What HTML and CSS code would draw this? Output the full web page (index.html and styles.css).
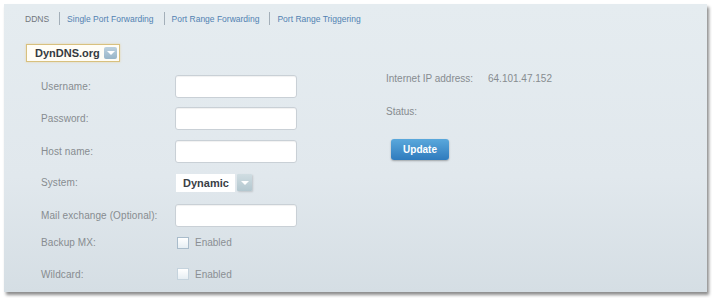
FILE: index.html
```html
<!DOCTYPE html>
<html lang="en">
<head>
  <meta charset="UTF-8">
  <title>DDNS</title>
  <link rel="stylesheet" href="styles.css">
</head>
<body>
  <div class="panel">
    <!-- Sub tabs -->
    <nav class="tabs">
      <span class="tab current">DDNS</span>
      <span class="sep"></span>
      <a class="tab" href="#">Single Port Forwarding</a>
      <span class="sep"></span>
      <a class="tab" href="#">Port Range Forwarding</a>
      <span class="sep"></span>
      <a class="tab" href="#">Port Range Triggering</a>
    </nav>

    <!-- Provider dropdown -->
    <div class="provider">
      <span class="provider-value">DynDNS.org</span>
      <span class="arrow-btn"><span class="tri"></span></span>
    </div>

    <div class="columns">
      <div class="form">
        <div class="form-row">
          <label class="label">Username:</label>
          <input class="text-input" type="text">
        </div>
        <div class="form-row r33">
          <label class="label">Password:</label>
          <input class="text-input" type="password">
        </div>
        <div class="form-row">
          <label class="label">Host name:</label>
          <input class="text-input" type="text">
        </div>
        <div class="form-row r31">
          <label class="label">System:</label>
          <div class="system-select">
            <span class="system-value">Dynamic</span>
            <span class="arrow-btn small"><span class="tri"></span></span>
          </div>
        </div>
        <div class="form-row r35">
          <label class="label">Mail exchange (Optional):</label>
          <input class="text-input" type="text">
        </div>
        <div class="form-row r19">
          <label class="label">Backup MX:</label>
          <span class="check"></span>
          <span class="check-text">Enabled</span>
        </div>
        <div class="form-row r40">
          <label class="label">Wildcard:</label>
          <span class="check faded"></span>
          <span class="check-text">Enabled</span>
        </div>
      </div>

      <div class="info">
        <div class="info-row">
          <span class="info-label">Internet IP address:</span>
          <span class="info-value">64.101.47.152</span>
        </div>
        <div class="info-row">
          <span class="info-label">Status:</span>
        </div>
        <button class="update-btn">Update</button>
      </div>
    </div>
  </div>
</body>
</html>
```

FILE: styles.css
```css
body {
  margin: 0;
  background-color: #ffffff;
  font-family: "Liberation Sans", Arial, sans-serif;
  font-size: 10px;
  color: #808589;
}
.panel {
  margin: 4px 5px 6px 4px;
  height: 288px;
  background: linear-gradient(to bottom, #e5ecf0 0%, #e1e8ed 60%, #d5dee4 100%);
  box-shadow: 2px 3px 3px rgba(0, 0, 0, 0.45);
  box-sizing: border-box;
  padding: 0 0 0 21px;
}

/* Tabs */
.tabs {
  display: flex;
  align-items: center;
  height: 29px;
  font-size: 8.5px;
}
.tab {
  color: #5282b2;
  text-decoration: none;
}
.tab.current {
  color: #71777c;
}
.sep {
  width: 1px;
  height: 13px;
  background-color: #a3afb9;
  margin: 0 7px 0 10px;
}

/* Provider dropdown */
.provider {
  display: flex;
  align-items: center;
  width: 94px;
  height: 18px;
  margin: 11px 0 0 1px;
  box-sizing: border-box;
  border: 1px solid #d8c07e;
  background-color: #fffdf6;
  box-shadow: 0 0 2px rgba(230, 200, 120, 0.6);
  padding: 0 2px 0 8px;
}
.provider-value {
  flex: 1;
  font-size: 11px;
  font-weight: bold;
  color: #353a3f;
}
.arrow-btn {
  display: flex;
  align-items: center;
  justify-content: center;
  width: 13px;
  height: 12px;
  background: linear-gradient(to bottom, #bcd1df, #98b5c8);
  border-radius: 2px;
}
.tri {
  width: 0;
  height: 0;
  border-left: 4px solid transparent;
  border-right: 4px solid transparent;
  border-top: 4px solid #ffffff;
}

/* Columns */
.columns {
  display: flex;
  margin-top: 8px;
}
.form {
  width: 344px;
  padding-left: 16px;
}
.form-row {
  display: flex;
  align-items: center;
  height: 32px;
}
.form-row.r33 { height: 33px; }
.form-row.r31 { height: 31px; }
.form-row.r35 { height: 35px; }
.form-row.r19 { height: 19px; }
.form-row.r40 { height: 40px; padding-top: 4px; box-sizing: border-box; }
.label {
  width: 134px;
  color: #878c90;
  letter-spacing: 0.1px;
}
.text-input {
  width: 122px;
  height: 23px;
  box-sizing: border-box;
  border: 1px solid #c9d0d6;
  border-radius: 3px;
  background-color: #ffffff;
  box-shadow: inset 0 1px 1px rgba(0, 0, 0, 0.06);
  margin: 0;
}

/* System select */
.system-select {
  display: flex;
  align-items: center;
  height: 18px;
  margin-left: 1px;
}
.system-value {
  display: flex;
  align-items: center;
  width: 59px;
  height: 18px;
  box-sizing: border-box;
  padding-left: 7px;
  background-color: #ffffff;
  font-size: 11px;
  font-weight: bold;
  color: #3a4046;
}
.arrow-btn.small {
  width: 15px;
  height: 17px;
  margin-left: 2px;
  border-radius: 1px;
  background: linear-gradient(to bottom, #d0dde2, #b3c7cf);
  box-shadow: 1px 1px 2px rgba(0, 0, 0, 0.15);
}

/* Checkboxes */
.check {
  width: 10px;
  height: 10px;
  border: 1px solid #a9bccb;
  background: linear-gradient(to bottom, #ffffff, #e6eef3);
  margin: 0 6px 0 2px;
}
.check.faded {
  border-color: #c5d3dd;
}
.check-text {
  color: #8a8f93;
}

/* Info column */
.info {
  padding-left: 1px;
  margin-top: -8px;
}
.info-row {
  display: flex;
  align-items: center;
  height: 33px;
}
.info-label {
  width: 102px;
  color: #878c90;
}
.info-value {
  color: #878c90;
}
.update-btn {
  display: block;
  margin: 11px 0 0 5px;
  width: 58px;
  height: 21px;
  border: none;
  border-radius: 3px;
  background: linear-gradient(to bottom, #5aa8dc, #2f7bbd);
  box-shadow: 0 1px 2px rgba(0, 0, 0, 0.3);
  color: #ffffff;
  font-family: "Liberation Sans", Arial, sans-serif;
  font-size: 10px;
  font-weight: bold;
  cursor: pointer;
}
```
